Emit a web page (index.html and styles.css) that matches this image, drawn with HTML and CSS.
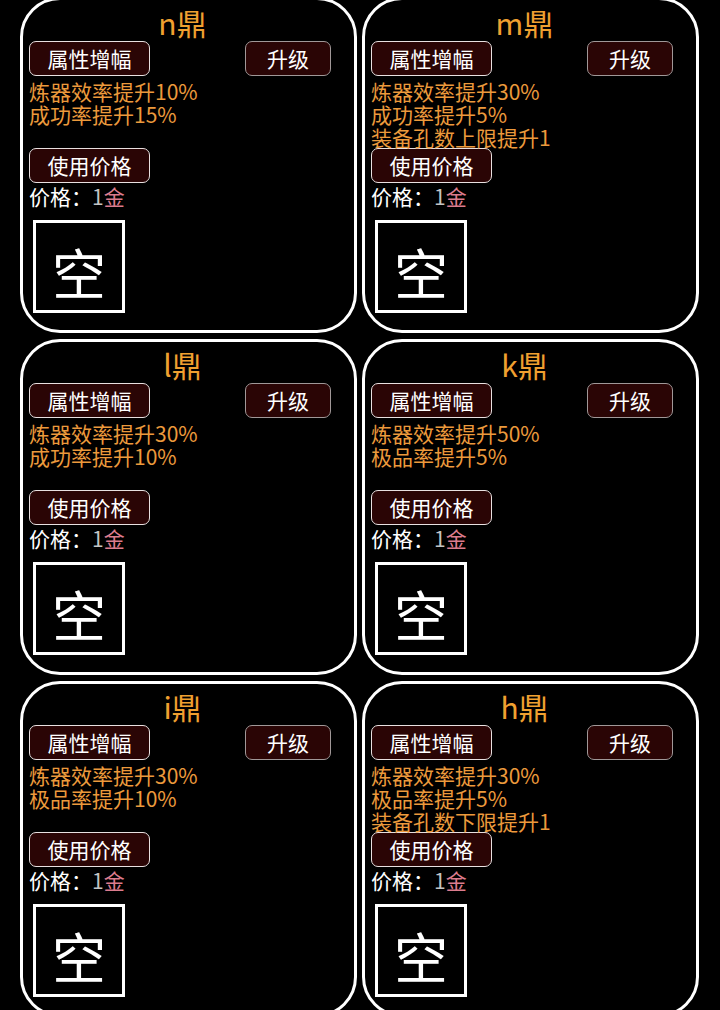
FILE: index.html
```html
<!DOCTYPE html>
<html lang="zh">
<head>
<meta charset="utf-8">
<link rel="stylesheet" href="styles.css">
</head>
<body>
<div class="grid">
  <div class="card">
    <div class="title">n鼎</div>
    <div class="btn-row"><div class="btn btn-wide">属性增幅</div><div class="btn btn-up">升级</div></div>
    <div class="effects"><div>炼器效率提升10%</div><div>成功率提升15%</div></div>
    <div class="btn btn-wide">使用价格</div>
    <div class="price">价格：<span class="num">1</span><span class="gold">金</span></div>
    <div class="slot">空</div>
  </div>
  <div class="card">
    <div class="title">m鼎</div>
    <div class="btn-row"><div class="btn btn-wide">属性增幅</div><div class="btn btn-up">升级</div></div>
    <div class="effects"><div>炼器效率提升30%</div><div>成功率提升5%</div><div>装备孔数上限提升1</div></div>
    <div class="btn btn-wide">使用价格</div>
    <div class="price">价格：<span class="num">1</span><span class="gold">金</span></div>
    <div class="slot">空</div>
  </div>
  <div class="card">
    <div class="title">l鼎</div>
    <div class="btn-row"><div class="btn btn-wide">属性增幅</div><div class="btn btn-up">升级</div></div>
    <div class="effects"><div>炼器效率提升30%</div><div>成功率提升10%</div></div>
    <div class="btn btn-wide">使用价格</div>
    <div class="price">价格：<span class="num">1</span><span class="gold">金</span></div>
    <div class="slot">空</div>
  </div>
  <div class="card">
    <div class="title">k鼎</div>
    <div class="btn-row"><div class="btn btn-wide">属性增幅</div><div class="btn btn-up">升级</div></div>
    <div class="effects"><div>炼器效率提升50%</div><div>极品率提升5%</div></div>
    <div class="btn btn-wide">使用价格</div>
    <div class="price">价格：<span class="num">1</span><span class="gold">金</span></div>
    <div class="slot">空</div>
  </div>
  <div class="card">
    <div class="title">i鼎</div>
    <div class="btn-row"><div class="btn btn-wide">属性增幅</div><div class="btn btn-up">升级</div></div>
    <div class="effects"><div>炼器效率提升30%</div><div>极品率提升10%</div></div>
    <div class="btn btn-wide">使用价格</div>
    <div class="price">价格：<span class="num">1</span><span class="gold">金</span></div>
    <div class="slot">空</div>
  </div>
  <div class="card">
    <div class="title">h鼎</div>
    <div class="btn-row"><div class="btn btn-wide">属性增幅</div><div class="btn btn-up">升级</div></div>
    <div class="effects"><div>炼器效率提升30%</div><div>极品率提升5%</div><div>装备孔数下限提升1</div></div>
    <div class="btn btn-wide">使用价格</div>
    <div class="price">价格：<span class="num">1</span><span class="gold">金</span></div>
    <div class="slot">空</div>
  </div>
</div>
</body>
</html>
```
FILE: styles.css
```css
html, body {
  margin: 0;
  padding: 0;
  background: #000;
  height: 1010px;
  overflow: hidden;
}
body {
  font-family: "Noto Sans CJK SC", "Noto Sans", sans-serif;
  color: #fff;
}
.grid {
  display: grid;
  grid-template-columns: 337px 337px;
  column-gap: 5px;
  row-gap: 6px;
  margin: -3px 0 0 20px;
}
.card {
  box-sizing: border-box;
  height: 336px;
  border: 3px solid #fff;
  border-radius: 40px;
  padding: 0 6px;
  display: flex;
  flex-direction: column;
  align-items: flex-start;
}
.title {
  align-self: stretch;
  margin-top: 5px;
  padding-right: 12px;
  height: 36px;
  font-size: 30px;
  line-height: 34px;
  text-align: center;
  color: #f0a030;
}
.btn-row {
  align-self: stretch;
  display: flex;
  justify-content: space-between;
  padding-right: 17px;
}
.btn {
  box-sizing: border-box;
  height: 35px;
  background: #2a0505;
  border: 1.5px solid #e8e0e0;
  border-radius: 7px;
  font-size: 21px;
  line-height: 32px;
  text-align: center;
  color: #fff;
}
.btn-wide {
  width: 121px;
}
.btn-up {
  width: 86px;
  border-color: #a09898;
}
.effects {
  height: 68px;
  margin-top: 4px;
  font-size: 21px;
  line-height: 23px;
  color: #ec9a3c;
  white-space: nowrap;
  position: relative;
  z-index: 1;
}
.price {
  margin-top: 1px;
  font-size: 21px;
  line-height: 24px;
  color: #fff;
}
.num {
  color: #c4c4c4;
}
.gold {
  color: #dc7c8e;
}
.slot {
  box-sizing: border-box;
  width: 92px;
  height: 93px;
  margin: 12px 0 0 4px;
  border: 3px solid #fff;
  font-size: 54px;
  line-height: 54px;
  padding-top: 22px;
  text-align: center;
  color: #fff;
}
```
